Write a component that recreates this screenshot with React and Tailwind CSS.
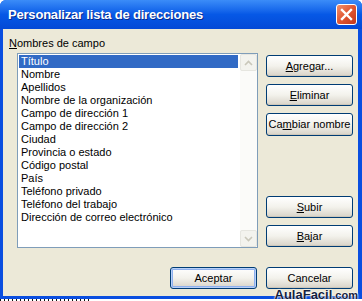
import React from "react";

const items = [
  "Título",
  "Nombre",
  "Apellidos",
  "Nombre de la organización",
  "Campo de dirección 1",
  "Campo de dirección 2",
  "Ciudad",
  "Provincia o estado",
  "Código postal",
  "País",
  "Teléfono privado",
  "Teléfono del trabajo",
  "Dirección de correo electrónico",
];

function Btn({ children, def, className = "" }) {
  return (
    <div
      className={
        "h-[22px] w-[87px] rounded-[3px] border border-[#003c74] bg-gradient-to-b from-[#ffffff] via-[#f3f2ec] to-[#d8d3c8] flex items-center justify-center text-[11px] text-black leading-none " +
        (def ? "shadow-[inset_0_0_0_1px_#b8d0f8,inset_0_0_0_2px_#8eb0ee] " : "shadow-[inset_0_-1px_0_#cdc7ba] ") +
        className
      }
    >
      {children}
    </div>
  );
}

export default function App() {
  return (
    <div
      className="relative w-[362px] h-[301px] overflow-hidden bg-white"
      style={{ fontFamily: '"Liberation Sans", Arial, sans-serif' }}
    >
      <div className="flex flex-col w-[362px] h-[299px] bg-[#0a4ee0] rounded-t-[6px]">
        {/* title bar */}
        <div className="h-[29px] flex items-center justify-between pl-[8px] pr-[5px] bg-gradient-to-b from-[#3b8cf8] via-[#0658e6] to-[#0449d6] rounded-t-[6px]">
          <span className="text-white font-bold text-[13px] tracking-[-0.2px] [text-shadow:1px_1px_0_#0a2a8a]">
            Personalizar lista de direcciones
          </span>
          <div className="w-[21px] h-[21px] rounded-[3px] border border-white bg-gradient-to-br from-[#f0906c] via-[#e05530] to-[#c2361a] flex items-center justify-center">
            <svg width="13" height="13" viewBox="0 0 13 13">
              <path d="M2 2 L11 11 M11 2 L2 11" stroke="white" strokeWidth="2.4" strokeLinecap="square" />
            </svg>
          </div>
        </div>
        {/* body */}
        <div className="flex-1 ml-[3px] mr-[4px] mb-[3px] bg-[#ece9d8] flex flex-col pt-[7px] pl-[6px] pr-[5px]">
          <div className="h-[14px] text-[11px] leading-[14px] text-black">
            <span className="underline">N</span>ombres de campo
          </div>
          <div className="flex mt-[3px] ml-[8px]">
            <div className="w-[241px] h-[195px] border border-[#7f9db9] bg-white flex">
              <div className="flex-1 flex flex-col pt-[1px] pl-[1px] pr-[2px]">
                {items.map((t, i) => (
                  <div
                    key={t}
                    className={
                      "h-[13px] leading-[13px] text-[11px] pl-[2px] whitespace-nowrap " +
                      (i === 0 ? "bg-[#316ac5] text-white" : "text-black")
                    }
                  >
                    {t}
                  </div>
                ))}
              </div>
              <div className="w-[17px] h-full bg-[#fbfbf9] flex flex-col justify-between">
                <div className="w-[17px] h-[17px] border border-[#e6e6e0] rounded-[2px] bg-[#f3f3ee] flex items-center justify-center">
                  <svg width="9" height="6" viewBox="0 0 9 6">
                    <path d="M1 5 L4.5 1.5 L8 5" stroke="#c9c7ba" strokeWidth="1.6" fill="none" />
                  </svg>
                </div>
                <div className="w-[17px] h-[17px] border border-[#e6e6e0] rounded-[2px] bg-[#f3f3ee] flex items-center justify-center">
                  <svg width="9" height="6" viewBox="0 0 9 6">
                    <path d="M1 1 L4.5 4.5 L8 1" stroke="#c9c7ba" strokeWidth="1.6" fill="none" />
                  </svg>
                </div>
              </div>
            </div>
            <div className="ml-[8px] flex flex-col justify-between pt-[2px] pb-[1px]">
              <div className="flex flex-col gap-[7px]">
                <Btn>
                  <span className="underline">A</span>gregar...
                </Btn>
                <Btn>
                  <span className="underline">E</span>liminar
                </Btn>
                <Btn className="h-[23px]">
                  Ca<span className="underline">m</span>biar nombre
                </Btn>
              </div>
              <div className="flex flex-col gap-[7px]">
                <Btn>
                  <span className="underline">S</span>ubir
                </Btn>
                <Btn>
                  <span className="underline">B</span>ajar
                </Btn>
              </div>
            </div>
          </div>
          <div className="flex justify-end gap-[9px] mt-[19px]">
            <Btn def>Aceptar</Btn>
            <Btn>Cancelar</Btn>
          </div>
        </div>
      </div>
      {/* bottom strip of underlying page */}
      <div className="absolute left-0 bottom-0 h-[2px] w-[90px] bg-[repeating-linear-gradient(90deg,#111_0_1px,transparent_1px_4px)]" />
      {/* watermark */}
      <div className="absolute right-[4px] bottom-[-2px] text-[13px] leading-[16px] font-bold text-[#14213d] [text-shadow:0_0_2px_#fff,0_0_2px_#fff,0_0_1px_#fff]">
        AulaFacil<span className="text-[11px]">.com</span>
      </div>
    </div>
  );
}
